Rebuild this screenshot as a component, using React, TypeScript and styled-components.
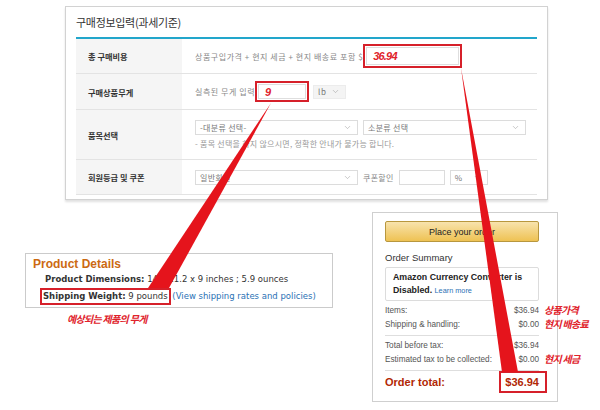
import React from 'react';
import styled, { createGlobalStyle } from 'styled-components';
import { ChevronDown } from 'lucide-react';

const GlobalStyle = createGlobalStyle`
  html, body {
    margin: 0;
    padding: 0;
    background: #fff;
  }
  * {
    box-sizing: border-box;
  }
`;

const KR = `"Noto Sans CJK KR", "Noto Sans", sans-serif`;
const ARIAL = `"Liberation Sans", Arial, sans-serif`;
const VERDANA = `"DejaVu Sans", Verdana, sans-serif`;
const MARK = '#d6202a';

const Page = styled.div`
  position: relative;
  width: 600px;
  height: 410px;
  overflow: hidden;
  font-family: ${KR};
`;

/* ---------- top form panel ---------- */

const Panel = styled.section`
  width: 483px;
  height: 194px;
  margin: 6px 0 0 65px;
  padding: 0 10px 4px;
  border: 1px solid #d2d2d2;
  box-shadow: 0 2px 2px rgba(0, 0, 0, 0.12);
  background: #fff;
`;

const Title = styled.h2`
  margin: 0;
  height: 32px;
  line-height: 31px;
  font-size: 11px;
  font-weight: 400;
  letter-spacing: -0.3px;
  color: #333;
  border-bottom: 2px solid #22a6cb;
`;

const Row = styled.div<{ $h: number }>`
  display: grid;
  grid-template-columns: 106px 1fr;
  height: ${(p) => p.$h}px;
  border-bottom: 1px solid #e3e3e3;
`;

const Label = styled.div`
  display: flex;
  align-items: center;
  padding-left: 12px;
  background: #f5f5f5;
  font-size: 8.2px;
  font-weight: 700;
  color: #333;
`;

const Cell = styled.div<{ $stack?: boolean }>`
  display: flex;
  flex-direction: ${(p) => (p.$stack ? 'column' : 'row')};
  align-items: ${(p) => (p.$stack ? 'flex-start' : 'center')};
  padding: ${(p) => (p.$stack ? '10px 0 0 13px' : '0 0 0 13px')};
  gap: 4px;
  font-size: 8px;
  letter-spacing: 0.55px;
  color: #888;
`;

const Line = styled.div`
  display: flex;
  align-items: center;
  gap: 5px;
  letter-spacing: 0.3px;
`;

const Plain = styled.span`
  white-space: nowrap;
`;

const Note = styled.div`
  font-size: 8px;
  line-height: 10px;
  color: #999;
  letter-spacing: 0.25px;
  white-space: nowrap;
`;

const Select = styled.div<{ $w: number; $h?: number; $fill?: boolean }>`
  display: flex;
  align-items: center;
  justify-content: space-between;
  width: ${(p) => p.$w}px;
  height: ${(p) => p.$h ?? 15}px;
  padding: 0 5px 0 4px;
  border: 1px solid ${(p) => (p.$fill ? '#ececec' : '#dcdcdc')};
  background: ${(p) => (p.$fill ? '#f4f4f4' : '#fff')};
  font-size: 8px;
  color: #777;
  white-space: nowrap;
`;

const TextInput = styled.div<{ $w: number }>`
  width: ${(p) => p.$w}px;
  height: 15px;
  border: 1px solid #dcdcdc;
`;

const Highlight = styled.div<{ $w: number; $h: number }>`
  flex: none;
  width: ${(p) => p.$w}px;
  height: ${(p) => p.$h}px;
  margin-left: -4px;
  padding: 1px;
  border: 2px solid ${MARK};
  background: #fff;
`;

const Filled = styled.div`
  display: flex;
  align-items: center;
  height: 100%;
  padding-left: 6px;
  border: 1px solid #dedede;
  font-family: ${ARIAL};
  font-size: 11px;
  font-weight: 700;
  font-style: italic;
  letter-spacing: -0.8px;
  color: #e0222b;
`;

const Chevron = () => <ChevronDown size={9} strokeWidth={1.4} color="#9a9a9a" />;

/* ---------- bottom area ---------- */

const Bottom = styled.div`
  display: flex;
  align-items: flex-start;
  padding-left: 25px;
`;

const LeftCol = styled.div`
  width: 308px;
  margin-top: 53px;
`;

const Details = styled.div`
  height: 55px;
  padding: 3px 7px 0;
  border: 1px solid #cbcbcb;
`;

const DetailsHead = styled.h3`
  margin: 0;
  line-height: 14px;
  font-family: ${ARIAL};
  font-size: 12px;
  font-weight: 700;
  color: #cc6a12;
`;

const DetailLine = styled.div`
  padding-left: 12px;
  line-height: 17px;
  font-family: ${VERDANA};
  font-size: 8.5px;
  color: #333;
  white-space: nowrap;
  b {
    font-weight: 700;
  }
`;

const Boxed = styled.span`
  display: inline-block;
  line-height: 13px;
  margin: 0 -1px 0 -5px;
  padding: 0 1px;
  border: 2px solid ${MARK};
`;

const Link = styled.span`
  color: #2a72b5;
`;

const Caption = styled.div`
  margin: 3px 0 0 42px;
  font-size: 10px;
  font-weight: 700;
  font-style: italic;
  letter-spacing: -0.7px;
  color: #e0222b;
`;

const Summary = styled.aside`
  width: 186px;
  height: 190px;
  margin: 12px 0 0 39px;
  padding: 8px 18px 0 12px;
  border: 1px solid #cfcfcf;
  font-family: ${ARIAL};
`;

const OrderButton = styled.div`
  height: 21px;
  display: flex;
  align-items: center;
  justify-content: center;
  border: 1px solid #b8973e;
  border-radius: 2px;
  background: linear-gradient(#f8e3ad, #eec253);
  font-size: 9px;
  color: #222;
`;

const SummaryHead = styled.div`
  margin-top: 8px;
  line-height: 16px;
  font-size: 9.5px;
  color: #333;
`;

const Converter = styled.div`
  margin-top: 1px;
  padding: 3px 7px;
  border: 1px solid #dcdcdc;
  border-radius: 2px;
  line-height: 13px;
  font-size: 8.8px;
  font-weight: 700;
  color: #222;
`;

const LearnMore = styled.span`
  font-size: 7.3px;
  font-weight: 400;
  color: #2a72b5;
`;

const Lines = styled.div<{ $top: number }>`
  margin-top: ${(p) => p.$top}px;
`;

const SumRow = styled.div`
  display: flex;
  justify-content: space-between;
  line-height: 14px;
  font-size: 8.2px;
  color: #555;
`;

const Amount = styled.span`
  position: relative;
`;

const Tag = styled.span`
  position: absolute;
  left: calc(100% + 5px);
  top: -1px;
  font-family: ${KR};
  font-size: 10px;
  font-weight: 700;
  font-style: italic;
  letter-spacing: -0.7px;
  white-space: nowrap;
  color: #e0222b;
`;

const Rule = styled.div`
  margin-top: 3px;
  border-top: 1px solid #dedede;
`;

const TotalRow = styled.div`
  display: flex;
  justify-content: space-between;
  align-items: center;
  height: 22px;
  font-size: 11px;
  font-weight: 700;
  color: #b12704;
`;

const TotalBox = styled.span`
  margin-right: -8px;
  padding: 3px 6px 3px 4px;
  border: 2px solid ${MARK};
  line-height: 12px;
`;

/* ---------- arrows drawn over everything ---------- */

const Arrows = styled.svg`
  position: absolute;
  left: 0;
  top: 0;
  pointer-events: none;
`;

export default function App() {
  return (
    <Page>
      <GlobalStyle />
      <Panel>
        <Title>구매정보입력(과세기준)</Title>
        <Row $h={35}>
          <Label>총 구매비용</Label>
          <Cell>
            <Plain>상품구입가격 + 현지 세금 + 현지 배송료 포함 $</Plain>
            <Highlight $w={99} $h={24}>
              <Filled>36.94</Filled>
            </Highlight>
          </Cell>
        </Row>
        <Row $h={36}>
          <Label>구매상품무게</Label>
          <Cell>
            <Plain>실측된 무게 입력</Plain>
            <Highlight $w={54} $h={21}>
              <Filled>9</Filled>
            </Highlight>
            <Select $w={33} $h={14} $fill>
              lb <Chevron />
            </Select>
          </Cell>
        </Row>
        <Row $h={50}>
          <Label>품목선택</Label>
          <Cell $stack>
            <Line>
              <Select $w={163}>
                -대분류 선택- <Chevron />
              </Select>
              <Select $w={163}>
                소분류 선택 <Chevron />
              </Select>
            </Line>
            <Note>- 품목 선택을 하지 않으시면, 정확한 안내가 불가능 합니다.</Note>
          </Cell>
        </Row>
        <Row $h={35}>
          <Label>회원등급 및 쿠폰</Label>
          <Cell>
            <Line>
              <Select $w={163}>
                일반회원 <Chevron />
              </Select>
              <Plain>쿠폰할인</Plain>
              <TextInput $w={46} />
              <Select $w={38}>
                % <Chevron />
              </Select>
            </Line>
          </Cell>
        </Row>
      </Panel>

      <Bottom>
        <LeftCol>
          <Details>
            <DetailsHead>Product Details</DetailsHead>
            <DetailLine>
              <b>Product Dimensions:</b> 14 x 11.2 x 9 inches ; 5.9 ounces
            </DetailLine>
            <DetailLine>
              <Boxed>
                <b>Shipping Weight:</b> 9 pounds
              </Boxed>{' '}
              <Link>(View shipping rates and policies)</Link>
            </DetailLine>
          </Details>
          <Caption>예상되는 제품의 무게</Caption>
        </LeftCol>

        <Summary>
          <OrderButton>Place your order</OrderButton>
          <SummaryHead>Order Summary</SummaryHead>
          <Converter>
            Amazon Currency Converter is Disabled. <LearnMore>Learn more</LearnMore>
          </Converter>
          <Lines $top={3}>
            <SumRow>
              Items:
              <Amount>
                $36.94<Tag>상품가격</Tag>
              </Amount>
            </SumRow>
            <SumRow>
              Shipping &amp; handling:
              <Amount>
                $0.00<Tag>현지 배송료</Tag>
              </Amount>
            </SumRow>
          </Lines>
          <Rule />
          <Lines $top={3}>
            <SumRow>
              Total before tax:
              <Amount>$36.94</Amount>
            </SumRow>
            <SumRow>
              Estimated tax to be collected:
              <Amount>
                $0.00<Tag>현지 세금</Tag>
              </Amount>
            </SumRow>
          </Lines>
          <Rule />
          <TotalRow>
            Order total:
            <TotalBox>$36.94</TotalBox>
          </TotalRow>
        </Summary>
      </Bottom>

      <Arrows width={600} height={410} viewBox="0 0 600 410">
        <polygon points="271,103 148,288 169,288" fill="#e5141c" />
        <polygon points="461,68 502,372 518,372" fill="#e5141c" />
      </Arrows>
    </Page>
  );
}
